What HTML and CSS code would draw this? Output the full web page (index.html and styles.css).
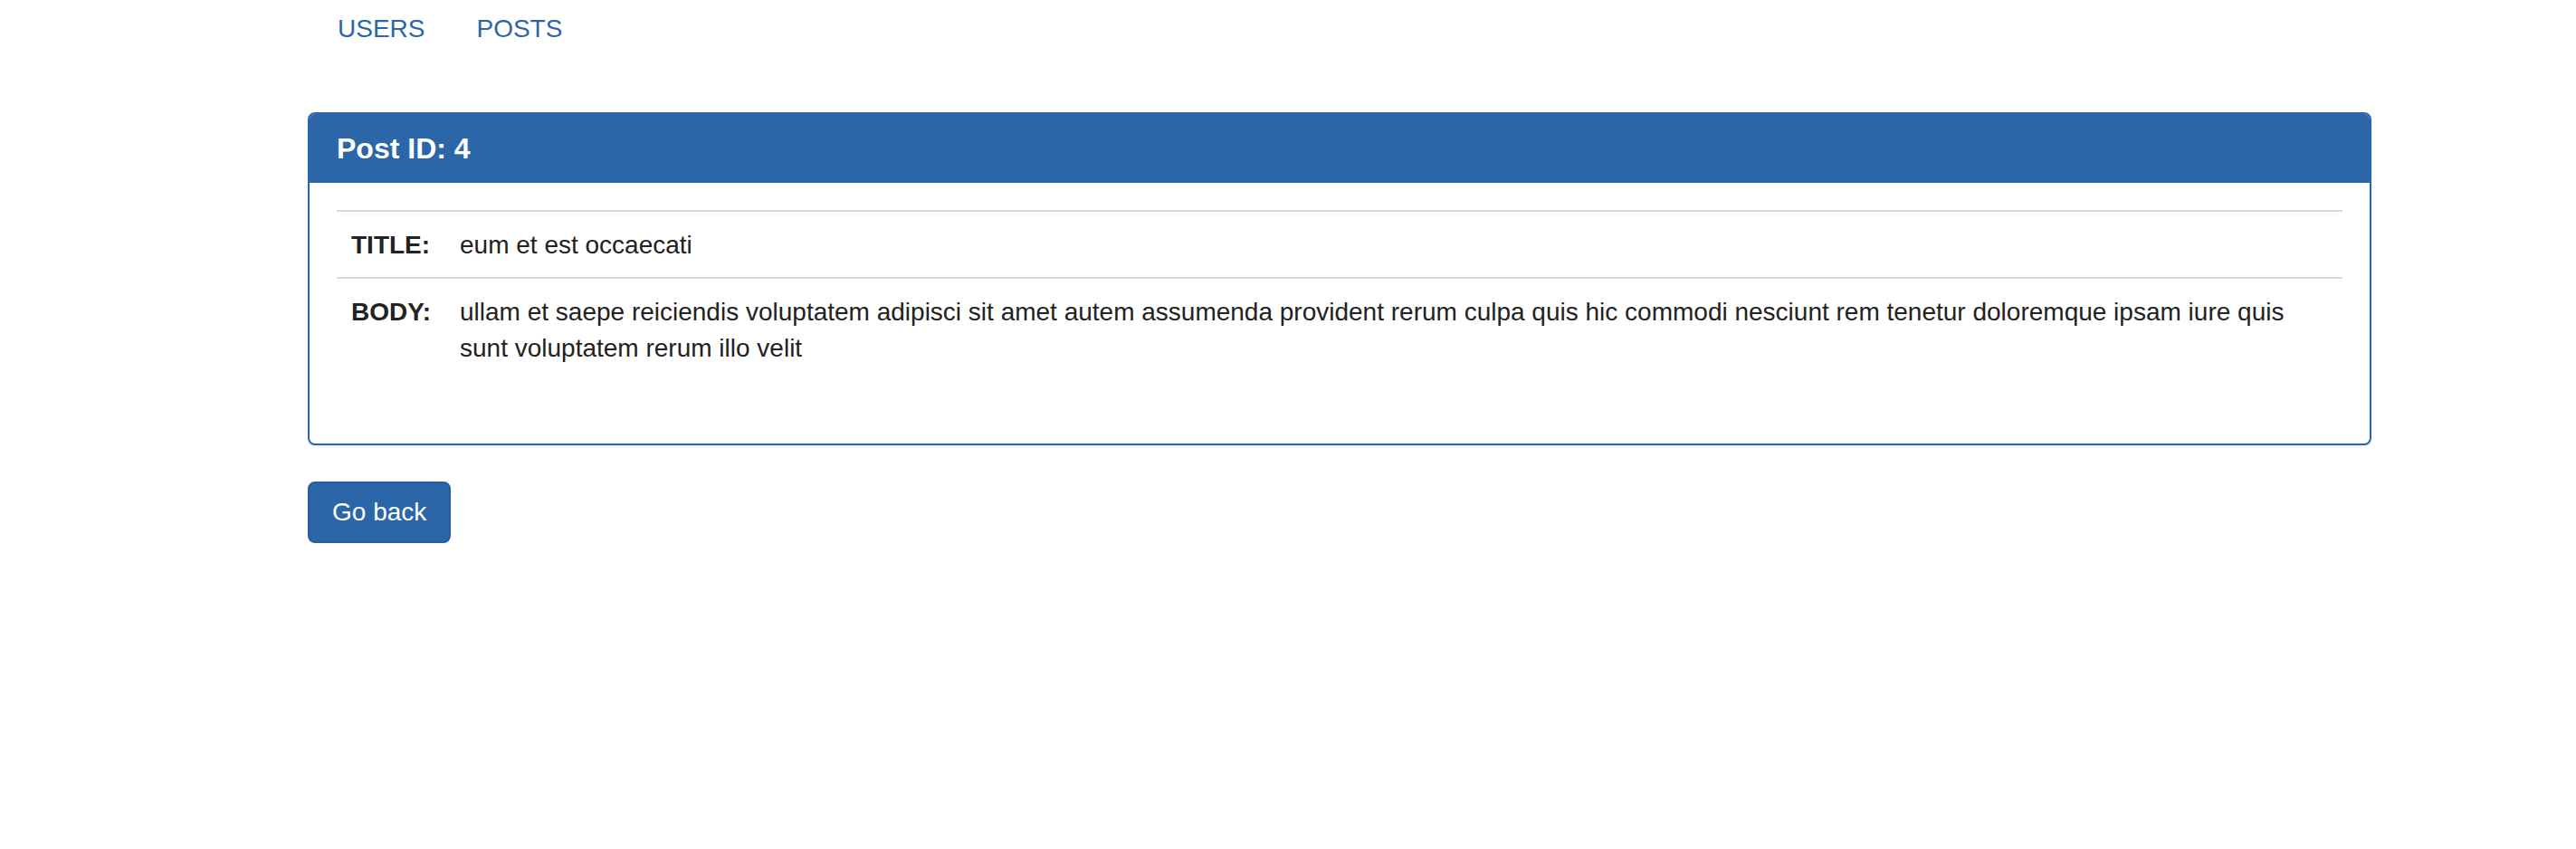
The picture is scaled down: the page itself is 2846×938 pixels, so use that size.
FILE: index.html
```html
<!DOCTYPE html>
<html lang="en">
<head>
<meta charset="utf-8">
<title>Post ID: 4</title>
<link rel="stylesheet" href="styles.css">
</head>
<body>
  <nav class="topnav">
    <a class="topnav-link" href="#">USERS</a>
    <a class="topnav-link" href="#">POSTS</a>
  </nav>
  <main class="container">
    <section class="panel">
      <header class="panel-heading">
        <h3 class="panel-title">Post ID: 4</h3>
      </header>
      <div class="panel-body">
        <table class="post-table">
          <colgroup>
            <col class="label-col">
            <col class="value-col">
          </colgroup>
          <tbody>
            <tr>
              <th class="label-cell">TITLE:</th>
              <td class="value-cell">eum et est occaecati</td>
            </tr>
            <tr>
              <th class="label-cell">BODY:</th>
              <td class="value-cell">ullam et saepe reiciendis voluptatem adipisci sit amet autem assumenda provident rerum culpa quis hic commodi nesciunt rem tenetur doloremque ipsam iure quis sunt voluptatem rerum illo velit</td>
            </tr>
          </tbody>
        </table>
      </div>
    </section>
    <button class="btn-primary" type="button">Go back</button>
  </main>
</body>
</html>
```
FILE: styles.css
```css
* {
  box-sizing: border-box;
}

html, body {
  margin: 0;
  padding: 0;
  background: #ffffff;
}

body {
  font-family: "Liberation Sans", Arial, "Helvetica Neue", sans-serif;
  font-size: 28px;
  line-height: 40px;
  color: #333333;
}

.topnav {
  display: flex;
  padding: 12px 0 0 343px;
  height: 124px;
}

.topnav-link {
  display: block;
  padding: 0 27px 0 30px;
  height: 40px;
  line-height: 40px;
  color: #2b66a8;
  text-decoration: none;
  font-size: 28px;
}

.container {
  margin-left: 340px;
  width: 2280px;
}

.panel {
  border: 2px solid #2b66a8;
  border-radius: 8px;
  box-shadow: 0 2px 2px rgba(0, 0, 0, 0.05);
  margin-bottom: 40px;
  background: #ffffff;
}

.panel-heading {
  background: #2b66a8;
  color: #ffffff;
  padding: 21px 30px 20px;
  border-radius: 6px 6px 0 0;
}

.panel-title {
  margin: 0;
  font-size: 32px;
  line-height: 35px;
  font-weight: bold;
  color: #ffffff;
}

.panel-body {
  padding: 30px;
}

.post-table {
  width: 100%;
  table-layout: fixed;
  border-collapse: collapse;
  border-spacing: 0;
  margin-bottom: 40px;
}

.label-col {
  width: 120px;
}

.post-table th,
.post-table td {
  padding: 17px 16px 15px;
  border-top: 2px solid #d8d8d8;
  vertical-align: top;
  text-align: left;
  line-height: 40px;
}

.label-cell {
  font-weight: bold;
  color: #222222;
}

.value-cell {
  color: #222222;
}

.btn-primary {
  display: inline-block;
  font-family: inherit;
  font-size: 28px;
  line-height: 40px;
  padding: 12px 25px;
  color: #ffffff;
  background: #2b66a8;
  border: 2px solid #285e9c;
  border-radius: 8px;
  cursor: pointer;
}
```
